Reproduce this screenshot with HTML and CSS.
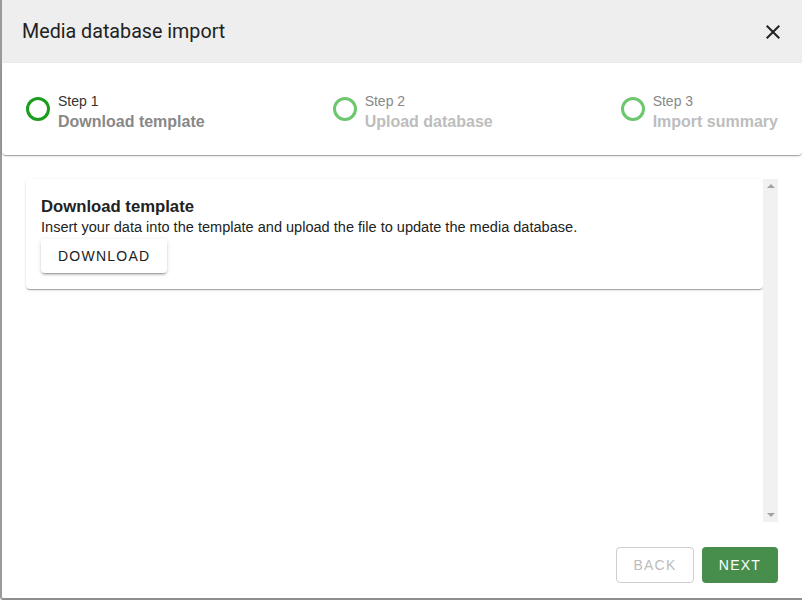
FILE: index.html
```html
<!DOCTYPE html>
<html>
<head>
<meta charset="utf-8">
<link rel="stylesheet" href="styles.css">
</head>
<body>
<div class="dialog">
  <header class="header">
    <h1 class="title">Media database import</h1>
    <button class="close" aria-label="close">
      <svg viewBox="0 0 24 24" width="24" height="24"><path d="M19 6.41L17.59 5 12 10.59 6.41 5 5 6.41 10.59 12 5 17.59 6.41 19 12 13.41 17.59 19 19 17.59 13.41 12z" fill="#222"/></svg>
    </button>
  </header>
  <div class="stepper">
    <div class="step active">
      <span class="circle"></span>
      <div class="step-text">
        <div class="step-num">Step 1</div>
        <div class="step-title">Download template</div>
      </div>
    </div>
    <div class="step">
      <span class="circle"></span>
      <div class="step-text">
        <div class="step-num">Step 2</div>
        <div class="step-title">Upload database</div>
      </div>
    </div>
    <div class="step">
      <span class="circle"></span>
      <div class="step-text">
        <div class="step-num">Step 3</div>
        <div class="step-title">Import summary</div>
      </div>
    </div>
  </div>
  <div class="body">
    <div class="scroller">
      <div class="scroll-content">
        <div class="card">
          <h2 class="card-title">Download template</h2>
          <p class="card-text">Insert your data into the template and upload the file to update the media database.</p>
          <button class="btn-download">Download</button>
        </div>
      </div>
      <div class="scrollbar">
        <span class="arrow arrow-up"></span>
        <span class="arrow arrow-down"></span>
      </div>
    </div>
  </div>
  <footer class="footer">
    <button class="btn btn-back">Back</button>
    <button class="btn btn-next">Next</button>
  </footer>
</div>
</body>
</html>
```
FILE: styles.css
```css
* { box-sizing: border-box; }
html, body { margin: 0; padding: 0; background: #fff; }
body { font-family: "Liberation Sans", Arial, sans-serif; width: 802px; height: 600px; overflow: hidden; }

.dialog {
  height: 600px;
  display: flex;
  flex-direction: column;
  border-left: 2px solid #9a9a9a;
  border-bottom: 2px solid #8e8e8e;
  border-bottom-left-radius: 3px;
  background: #fff;
}

.header {
  height: 63px;
  flex: none;
  background: #eeeeee;
  display: flex;
  align-items: center;
  justify-content: space-between;
  padding: 0 17px 0 20px;
}
.title { margin: 0; font-family: Roboto, "Liberation Sans", sans-serif; font-size: 19.7px; font-weight: 400; color: #222; }
.close { border: 0; background: none; padding: 0; width: 24px; height: 24px; display: flex; cursor: pointer; }

.stepper {
  flex: none;
  height: 92px;
  display: flex;
  justify-content: space-between;
  align-items: flex-start;
  padding: 29px 24px 0 24px;
  background: #fff;
  border-radius: 4px;
  box-shadow: 0 2px 1px -1px rgba(0,0,0,.2), 0 1px 1px 0 rgba(0,0,0,.14), 0 1px 3px 0 rgba(0,0,0,.12);
  position: relative;
  z-index: 1;
}
.step { display: flex; align-items: flex-start; gap: 8px; }
.circle {
  width: 24px; height: 24px;
  margin-top: 5px;
  border-radius: 50%;
  border: 3px solid #6dc76d;
  flex: none;
}
.step.active .circle { border-color: #1c9d1c; }
.step-num { font-size: 14px; line-height: 18px; color: #888; }
.step-title { font-size: 16px; line-height: 24px; font-weight: 700; color: #bdbdbd; }
.step.active .step-num { color: #333; }
.step.active .step-title { color: #888; }

.body { flex: 1; padding: 24px 24px 0 24px; }
.scroller {
  height: 343px;
  display: flex;
}
.scroll-content { flex: 1; min-width: 0; }
.scrollbar {
  width: 15px;
  flex: none;
  background: #f1f1f1;
  display: flex;
  flex-direction: column;
  justify-content: space-between;
  align-items: center;
  padding: 5px 0 5px 0;
}
.arrow { width: 0; height: 0; border-left: 4px solid transparent; border-right: 4px solid transparent; }
.arrow-up { border-bottom: 4px solid #a3a3a3; }
.arrow-down { border-top: 4px solid #a3a3a3; }

.card {
  background: #fff;
  border-radius: 4px;
  padding: 18px 15px 16px 15px;
  box-shadow: 0 2px 1px -1px rgba(0,0,0,.2), 0 1px 1px 0 rgba(0,0,0,.14), 0 1px 3px 0 rgba(0,0,0,.12);
}
.card-title { margin: 0; font-size: 16.7px; line-height: 20px; font-weight: 700; color: #222; }
.card-text { margin: 0; font-size: 14.55px; line-height: 20px; color: #222; }
.btn-download {
  margin-top: 2px;
  height: 34px;
  padding: 0 17px;
  border: 0;
  border-radius: 4px;
  background: #fff;
  font-family: inherit;
  font-size: 14px;
  letter-spacing: 1.25px;
  text-transform: uppercase;
  color: #222;
  box-shadow: 0 3px 1px -2px rgba(0,0,0,.2), 0 2px 2px 0 rgba(0,0,0,.14), 0 1px 5px 0 rgba(0,0,0,.12);
}

.footer {
  flex: none;
  display: flex;
  justify-content: flex-end;
  gap: 8px;
  padding: 25px 24px 15px 24px;
}
.btn {
  height: 36px;
  border-radius: 4px;
  font-family: inherit;
  font-size: 14px;
  letter-spacing: 1.25px;
  text-transform: uppercase;
  padding: 0;
}
.btn-back { width: 78px; background: #fff; border: 1px solid #cfcfcf; color: #bcbcbc; }
.btn-next { width: 76px; background: #478e4c; border: 0; color: #fff; }
```
